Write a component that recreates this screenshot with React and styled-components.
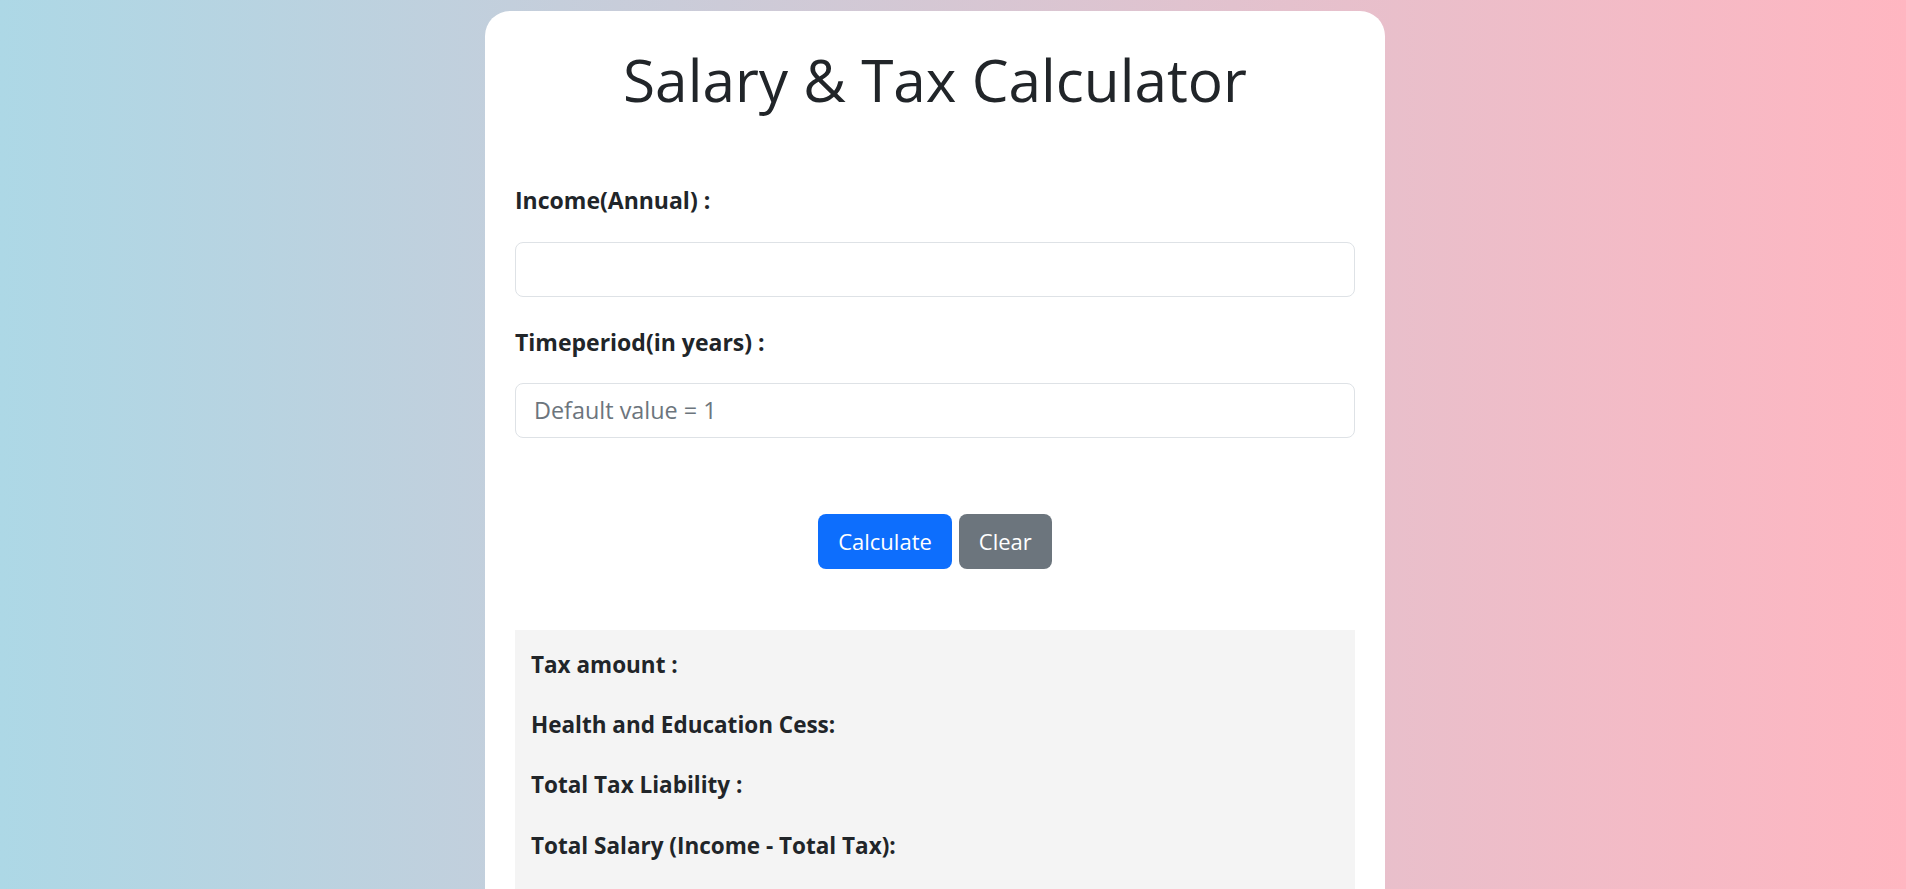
import React, { useState } from "react";
import styled, { createGlobalStyle } from "styled-components";

const GlobalStyle = createGlobalStyle`
  html, body {
    margin: 0;
    padding: 0;
  }
  body {
    min-height: 100vh;
    font-family: "Open Sans", "Noto Sans", "Liberation Sans", sans-serif;
    color: #212529;
    background: linear-gradient(to right, #add8e6, #ffb6c1);
  }
  * {
    box-sizing: border-box;
  }
`;

export default function App() {
  const [income, setIncome] = useState("");
  const [years, setYears] = useState("");

  return (
    <Page>
      <GlobalStyle />
      <Card>
        <Title>Salary &amp; Tax Calculator</Title>
        <Field>
          <Label htmlFor="income">Income(Annual) :</Label>
          <Input
            id="income"
            type="text"
            value={income}
            onChange={(e) => setIncome(e.target.value)}
          />
        </Field>
        <Field>
          <Label htmlFor="years">Timeperiod(in years) :</Label>
          <Input
            id="years"
            type="text"
            placeholder="Default value = 1"
            value={years}
            onChange={(e) => setYears(e.target.value)}
          />
        </Field>
        <Actions>
          <Button variant="primary">Calculate</Button>
          <Button
            variant="secondary"
            onClick={() => {
              setIncome("");
              setYears("");
            }}
          >
            Clear
          </Button>
        </Actions>
        <Results>
          <ResultLine>Tax amount :</ResultLine>
          <ResultLine>Health and Education Cess:</ResultLine>
          <ResultLine>Total Tax Liability :</ResultLine>
          <ResultLine>Total Salary (Income - Total Tax):</ResultLine>
        </Results>
      </Card>
    </Page>
  );
}

const Page = styled.div`
  padding: 11px 36px 40px 0;
`;

const Card = styled.div`
  width: 900px;
  margin: 0 auto;
  padding: 33px 30px 30px;
  background: #fff;
  border-radius: 25px;
`;

const Title = styled.h1`
  margin: 0 0 70px;
  font-size: 58.5px;
  font-weight: 500;
  line-height: 1.2;
  text-align: center;
`;

const Field = styled.div`
  display: flex;
  flex-direction: column;
  margin-bottom: 29px;
`;

const Label = styled.label`
  display: block;
  margin-bottom: 24px;
  font-size: 23px;
  font-weight: 700;
  line-height: 1.45;
`;

const Input = styled.input`
  width: 100%;
  height: 55px;
  padding: 0 18px;
  border: 1px solid #dee2e6;
  border-radius: 8px;
  background: #fff;
  font-family: inherit;
  font-size: 23.4px;
  color: #212529;
  outline: none;
  &::placeholder {
    color: #6c757d;
  }
`;

const Actions = styled.div`
  display: flex;
  justify-content: center;
  gap: 7px;
  margin-top: 76px;
`;

const Button = styled.button`
  height: 55px;
  padding: 0 20px;
  border: none;
  border-radius: 8px;
  font-family: inherit;
  font-size: 22px;
  color: #fff;
  cursor: pointer;
  background: ${(props) =>
    props.variant === "primary" ? "#0d6efd" : "#6c757d"};
`;

const Results = styled.div`
  margin-top: 61px;
  padding: 18px 16px 30px;
  background: #f4f4f4;
`;

const ResultLine = styled.p`
  margin: 0 0 27px;
  font-size: 22.5px;
  font-weight: 700;
  line-height: 1.48;
`;
